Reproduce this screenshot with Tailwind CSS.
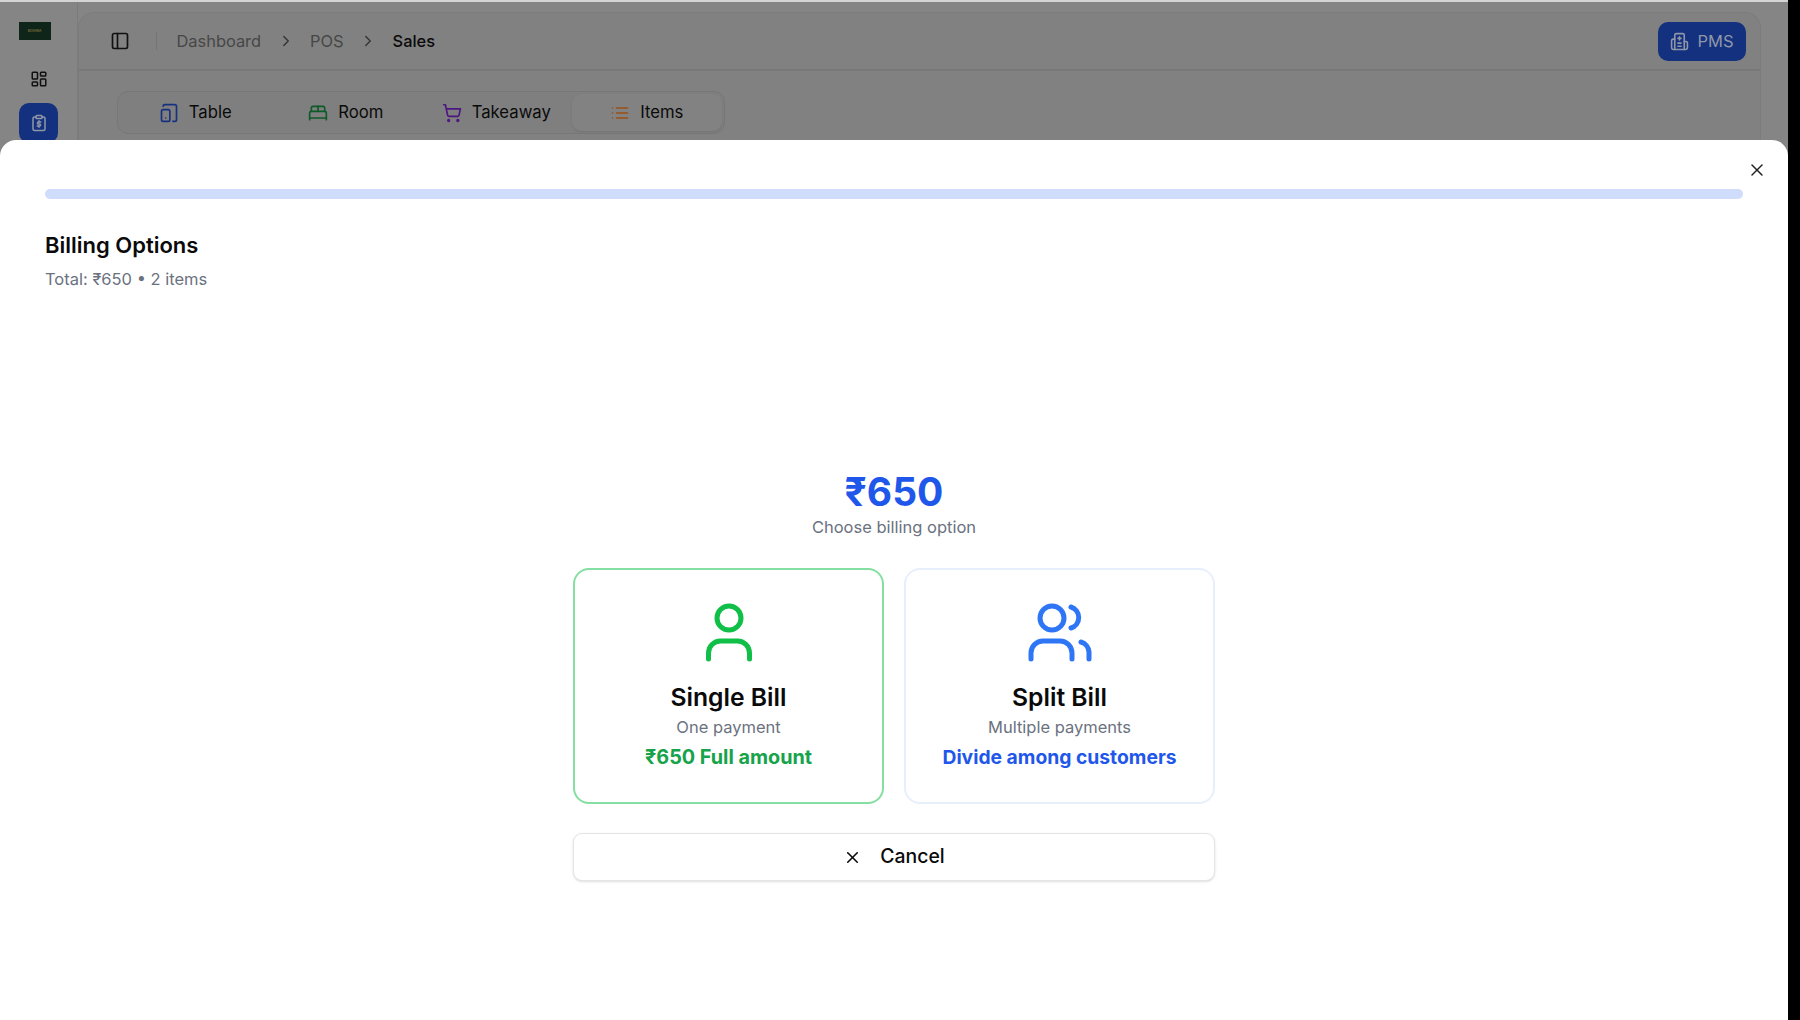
<!doctype html>
<html>
<head>
<meta charset="utf-8">
<script src="https://cdn.jsdelivr.net/npm/@tailwindcss/browser@4"></script>
</head>
<body class="bg-black overflow-hidden font-['Inter',sans-serif]">
<div class="w-[1800px] h-[1020px] flex bg-black">
  <div class="relative w-[1788px] h-full flex flex-col bg-[#858585] overflow-hidden">
    <div class="h-[2px] bg-[#d4d4d4] shrink-0"></div>
    <div class="flex flex-1 min-h-0">
      <aside class="w-[78px] shrink-0 flex flex-col items-center border-r border-[#7c7c7c]">
        <div class="mt-[20px] ml-[-8px] w-[32px] h-[18px] bg-[#10251a] flex items-center justify-center">
          <span class="text-[3px] leading-none text-[#a08c4a]">MOHANA</span>
        </div>
        <svg class="mt-[30px] w-[18px] h-[18px] text-[#111]" viewBox="0 0 24 24" fill="none" stroke="currentColor" stroke-width="2" stroke-linecap="round" stroke-linejoin="round"><rect x="3" y="3" width="7" height="9" rx="1"/><rect x="14" y="3" width="7" height="5" rx="1"/><rect x="14" y="12" width="7" height="9" rx="1"/><rect x="3" y="16" width="7" height="5" rx="1"/></svg>
        <div class="mt-[15px] w-[39px] h-[40px] rounded-[10px] bg-[#14317f] flex items-center justify-center">
          <svg class="w-[18px] h-[18px] text-[#8f96a8]" viewBox="0 0 24 24" fill="none" stroke="currentColor" stroke-width="2" stroke-linecap="round" stroke-linejoin="round"><rect x="8" y="2" width="8" height="4" rx="1"/><path d="M16 4h2a2 2 0 0 1 2 2v14a2 2 0 0 1-2 2H6a2 2 0 0 1-2-2V6a2 2 0 0 1 2-2h2"/><path d="M14.5 10.5h-3.2a1.4 1.4 0 0 0 0 2.8h1.4a1.4 1.4 0 0 1 0 2.8H9.5"/><path d="M12 9v1.5M12 16v1.5"/></svg>
        </div>
      </aside>
      <main class="w-[1683px] shrink-0 mt-[10px] rounded-tl-2xl rounded-tr-2xl border-x border-t border-[#7c7c7c] bg-[#818181]">
        <header class="h-[58px] border-b-2 border-[#787878] flex items-center pl-[31px] pr-[14px]">
          <svg class="w-[20px] h-[20px] text-[#111]" viewBox="0 0 24 24" fill="none" stroke="currentColor" stroke-width="2" stroke-linecap="round" stroke-linejoin="round"><rect x="3" y="3" width="18" height="18" rx="2"/><path d="M9 3v18"/></svg>
          <div class="ml-[26px] w-px h-[18px] bg-[#747474]"></div>
          <nav class="ml-[19.5px] flex items-center text-[16.4px] text-[#474747]">
            <span>Dashboard</span>
            <svg class="mx-[15.5px] w-[18px] h-[18px] text-[#333]" viewBox="0 0 24 24" fill="none" stroke="currentColor" stroke-width="1.8" stroke-linecap="round" stroke-linejoin="round"><path d="m9 18 6-6-6-6"/></svg>
            <span>POS</span>
            <svg class="mx-[15.5px] w-[18px] h-[18px] text-[#333]" viewBox="0 0 24 24" fill="none" stroke="currentColor" stroke-width="1.8" stroke-linecap="round" stroke-linejoin="round"><path d="m9 18 6-6-6-6"/></svg>
            <span class="text-[#0a0a0a] font-medium">Sales</span>
          </nav>
          <div class="ml-auto w-[88px] h-[39px] rounded-[10px] bg-[#14317f] flex items-center justify-center gap-[8px] text-[16.5px] text-[#8f96a8]">
            <svg class="w-[19px] h-[19px]" viewBox="0 0 24 24" fill="none" stroke="currentColor" stroke-width="2" stroke-linecap="round" stroke-linejoin="round"><path d="M12 6v4"/><path d="M14 14h-4"/><path d="M14 18h-4"/><path d="M14 8h-4"/><path d="M18 12h2a2 2 0 0 1 2 2v6a2 2 0 0 1-2 2H4a2 2 0 0 1-2-2v-9a2 2 0 0 1 2-2h2"/><path d="M18 22V4a2 2 0 0 0-2-2H8a2 2 0 0 0-2 2v18"/></svg>
            <span>PMS</span>
          </div>
        </header>
        <div class="ml-[38px] mt-[20px] w-[608px] h-[43px] rounded-[11px] border border-[#777777] bg-[#7f7f7f] grid grid-cols-4 px-[2px] py-[2px]">
          <div class="flex items-center justify-center gap-[10px] text-[16.7px] text-[#0a0a0a]">
            <svg class="w-[20px] h-[20px] text-[#17307f]" viewBox="0 0 24 24" fill="none" stroke="currentColor" stroke-width="2" stroke-linecap="round" stroke-linejoin="round"><rect width="10" height="14" x="3" y="8" rx="2"/><path d="M5 4a2 2 0 0 1 2-2h12a2 2 0 0 1 2 2v16a2 2 0 0 1-2 2h-2.4"/><path d="M8 18h.01"/></svg>
            <span>Table</span>
          </div>
          <div class="flex items-center justify-center gap-[10px] text-[16.7px] text-[#0a0a0a]">
            <svg class="w-[20px] h-[20px] text-[#0f5a2a]" viewBox="0 0 24 24" fill="none" stroke="currentColor" stroke-width="2" stroke-linecap="round" stroke-linejoin="round"><path d="M2 20v-8a2 2 0 0 1 2-2h16a2 2 0 0 1 2 2v8"/><path d="M4 10V6a2 2 0 0 1 2-2h12a2 2 0 0 1 2 2v4"/><path d="M12 4v6"/><path d="M2 18h20"/></svg>
            <span>Room</span>
          </div>
          <div class="flex items-center justify-center gap-[10px] text-[16.7px] text-[#0a0a0a]">
            <svg class="w-[20px] h-[20px] text-[#4d1680]" viewBox="0 0 24 24" fill="none" stroke="currentColor" stroke-width="2" stroke-linecap="round" stroke-linejoin="round"><circle cx="8" cy="21" r="1"/><circle cx="19" cy="21" r="1"/><path d="M2.05 2.05h2l2.66 12.42a2 2 0 0 0 2 1.58h9.78a2 2 0 0 0 1.95-1.57l1.65-7.43H5.12"/></svg>
            <span>Takeaway</span>
          </div>
          <div class="flex items-center justify-center gap-[10px] text-[16.7px] text-[#0a0a0a] rounded-[9px] bg-[#828282] shadow-[0_1px_2px_rgba(0,0,0,0.1)]">
            <svg class="w-[20px] h-[20px] text-[#9a4f15]" viewBox="0 0 24 24" fill="none" stroke="currentColor" stroke-width="2" stroke-linecap="round" stroke-linejoin="round"><path d="M3 12h.01"/><path d="M3 18h.01"/><path d="M3 6h.01"/><path d="M8 12h13"/><path d="M8 18h13"/><path d="M8 6h13"/></svg>
            <span>Items</span>
          </div>
        </div>
      </main>
    </div>

    <section class="absolute left-0 right-0 top-[140px] bottom-0 rounded-t-[16px] bg-white pt-[49px] px-[45px]">
      <svg class="absolute right-[21px] top-[20px] w-[20px] h-[20px] text-[#222]" viewBox="0 0 24 24" fill="none" stroke="currentColor" stroke-width="1.8" stroke-linecap="round" stroke-linejoin="round"><path d="M18 6 6 18"/><path d="m6 6 12 12"/></svg>
      <div class="h-[10px] rounded-full bg-[#cfdcfb]"></div>
      <h2 class="mt-[32px] text-[22px] leading-[28px] font-semibold text-[#0a0a0a]">Billing Options</h2>
      <p class="mt-[8px] text-[16.5px] leading-[24px] text-[#6b7280]">Total: ₹650 • 2 items</p>

      <div class="mt-[179px] flex flex-col items-center">
        <div class="text-[39px] leading-[44px] font-bold text-[#1f57eb]">₹650</div>
        <div class="mt-[1px] text-[16.5px] leading-[24px] text-[#6b7280]">Choose billing option</div>
        <div class="mt-[29px] w-[642px] grid grid-cols-2 gap-[20px]">
          <div class="h-[236px] rounded-[16px] border-[2px] border-[#84dfa1] flex flex-col items-center pt-[31px]">
            <svg class="w-[64px] h-[64px]" viewBox="0 0 64 64" fill="none" stroke="#10bf47" stroke-width="5" stroke-linecap="round" stroke-linejoin="round"><circle cx="32" cy="17" r="12"/><path d="M11.5 58v-6a12 12 0 0 1 12-12h17a12 12 0 0 1 12 12v6"/></svg>
            <div class="mt-[16px] text-[24.7px] leading-[32px] font-semibold text-[#0a0a0a]">Single Bill</div>
            <div class="mt-[2px] text-[16.5px] leading-[24px] text-[#6b7280]">One payment</div>
            <div class="mt-[5px] text-[19.8px] leading-[26px] font-bold text-[#16a34a]">₹650 Full amount</div>
          </div>
          <div class="h-[236px] rounded-[16px] border-[2px] border-[#e8effc] flex flex-col items-center pt-[31px]">
            <svg class="w-[64px] h-[64px]" viewBox="0 0 64 64" fill="none" stroke="#2f76f6" stroke-width="5" stroke-linecap="round" stroke-linejoin="round"><circle cx="24" cy="17" r="12"/><path d="M3 58v-6a12 12 0 0 1 12-12h17a12 12 0 0 1 12 12v6"/><path d="M43 6a11 11 0 0 1 0 21"/><path d="M53 41a11 11 0 0 1 8 10v7"/></svg>
            <div class="mt-[16px] text-[24.7px] leading-[32px] font-semibold text-[#0a0a0a]">Split Bill</div>
            <div class="mt-[2px] text-[16.5px] leading-[24px] text-[#6b7280]">Multiple payments</div>
            <div class="mt-[5px] text-[19.3px] leading-[26px] font-bold text-[#1f57eb]">Divide among customers</div>
          </div>
        </div>
        <div class="mt-[29px] w-[642px] h-[48px] rounded-[9px] border border-[#e5e5e5] shadow-sm bg-white flex items-center justify-center gap-[18px] text-[19.4px] font-medium text-[#0a0a0a]">
          <svg class="w-[19px] h-[19px]" viewBox="0 0 24 24" fill="none" stroke="currentColor" stroke-width="2" stroke-linecap="round" stroke-linejoin="round"><path d="M18 6 6 18"/><path d="m6 6 12 12"/></svg>
          <span>Cancel</span>
        </div>
      </div>
    </section>
  </div>
</div>
</body>
</html>
